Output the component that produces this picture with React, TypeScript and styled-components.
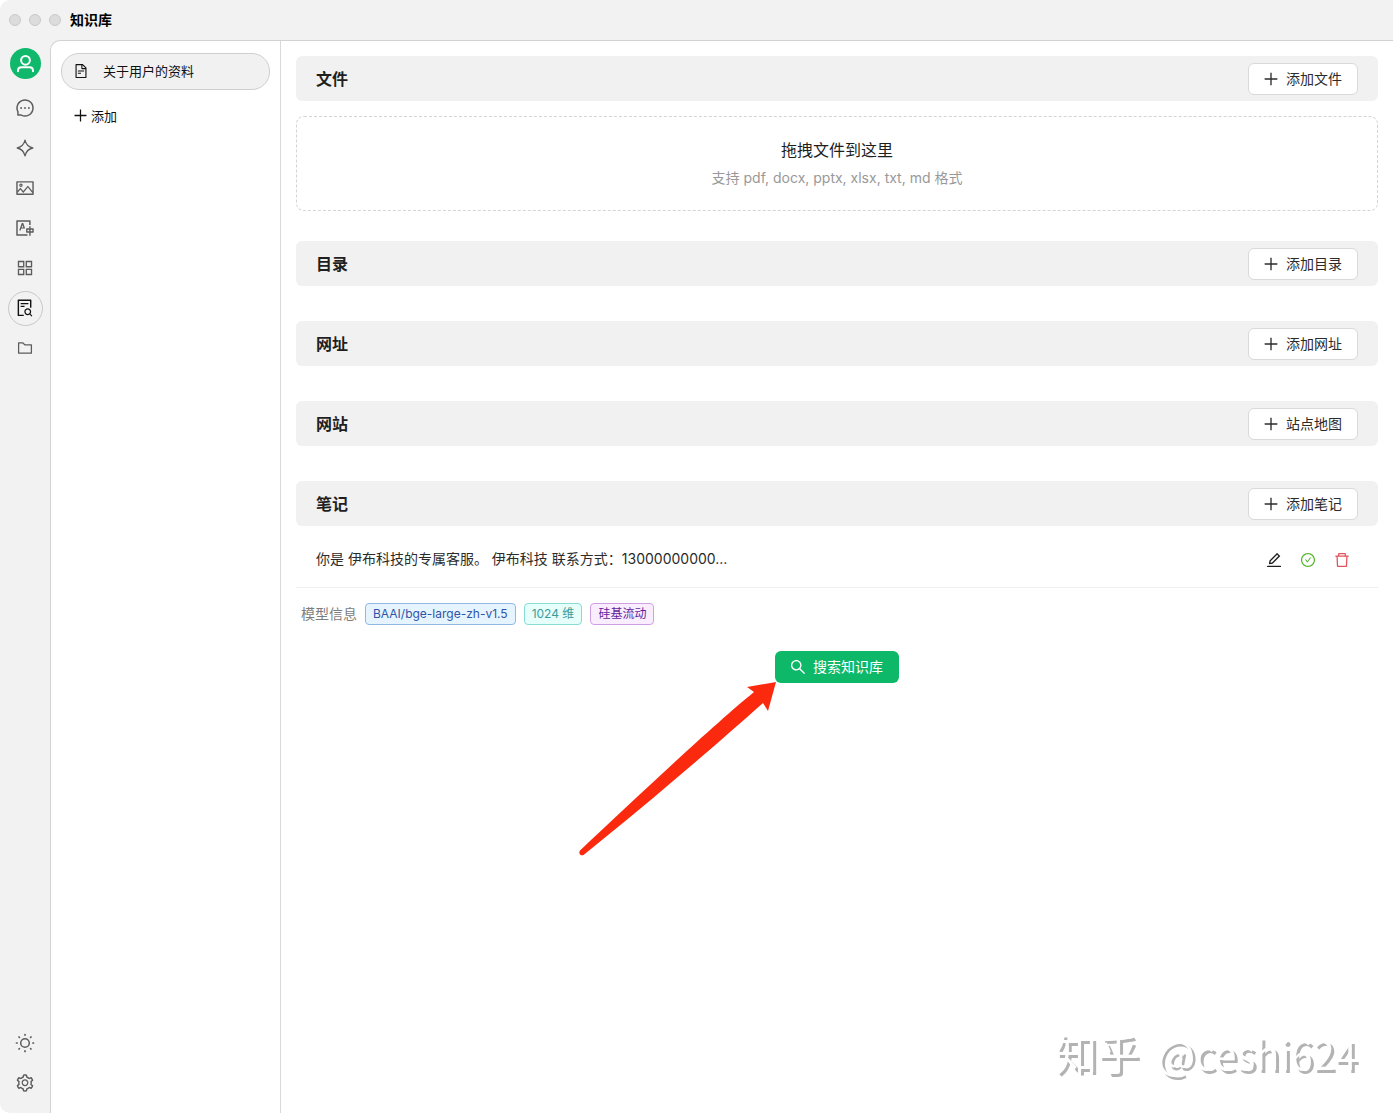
import React from 'react';
import styled, { createGlobalStyle, css } from 'styled-components';
import {
  AiOutlineMessage,
  AiOutlinePicture,
  AiOutlineTranslation,
  AiOutlineAppstore,
  AiOutlineFileSearch,
  AiOutlineFolder,
  AiOutlineSetting,
  AiOutlineFileText,
  AiOutlinePlus,
  AiOutlineEdit,
  AiOutlineCheckCircle,
  AiOutlineDelete,
  AiOutlineSearch,
} from 'react-icons/ai';

const GlobalStyle = createGlobalStyle`
  *, *::before, *::after { box-sizing: border-box; }
  body {
    margin: 0;
    background: #fff;
    color: #1f1f1f;
    font-family: Inter, "Noto Sans CJK SC", sans-serif;
    font-size: 14px;
    line-height: 22px;
  }
  button { font: inherit; color: inherit; cursor: pointer; }
  h1, h2, p { margin: 0; }
`;

const Window = styled.div`
  display: flex;
  flex-direction: column;
  min-height: 100vh;
  background: #f2f2f2;
  border-radius: 10px 0 0 10px;
  overflow: hidden;
`;

const TitleBar = styled.header`
  display: flex;
  align-items: center;
  height: 40px;
  padding-left: 9px;
`;

const Lights = styled.div`
  display: flex;
  gap: 8px;
  margin-right: 9px;
`;

const Light = styled.span`
  width: 12px;
  height: 12px;
  border: 1px solid #c9c9c9;
  border-radius: 50%;
  background: #dcdcdc;
`;

const AppTitle = styled.h1`
  font-size: 14px;
  font-weight: 700;
  line-height: 22px;
  color: #000;
`;

const Body = styled.div`
  display: flex;
  flex: 1;
`;

const Sidebar = styled.nav`
  display: flex;
  flex-direction: column;
  align-items: center;
  justify-content: space-between;
  width: 50px;
  padding: 8px 0 12px 1px;
`;

const SideGroup = styled.div`
  display: flex;
  flex-direction: column;
  align-items: center;
  gap: 5px;
`;

const Avatar = styled.button`
  display: flex;
  align-items: center;
  justify-content: center;
  width: 31px;
  height: 31px;
  margin-bottom: 7px;
  padding: 0;
  border: 0;
  border-radius: 50%;
  background: #0fb86b;
  color: #fff;
`;

const SideButton = styled.button<{ $active?: boolean }>`
  display: flex;
  align-items: center;
  justify-content: center;
  width: 35px;
  height: 35px;
  padding: 0 1px 1px 0;
  border: 1px solid ${(p) => (p.$active ? '#c8c8c8' : 'transparent')};
  border-radius: 50%;
  background: transparent;
  color: ${(p) => (p.$active ? '#111' : '#5c5c5c')};
`;

const Content = styled.div`
  display: flex;
  flex: 1;
  min-width: 0;
  border: solid #d2d2d2;
  border-width: 1px 0 0 1px;
  border-top-left-radius: 10px;
  background: #fff;
`;

const BaseList = styled.aside`
  display: flex;
  flex-direction: column;
  flex: none;
  gap: 8px;
  width: 230px;
  padding: 12px 10px;
  border-right: 1px solid #d9d9d9;
  font-size: 13px;
  color: #111;
`;

const BaseItem = styled.button`
  display: flex;
  align-items: center;
  gap: 14px;
  height: 37px;
  padding: 0 11px 2px;
  border: 1px solid #cfcfcf;
  border-radius: 18px;
  background: #f1f1f1;
`;

const AddBase = styled.button`
  display: flex;
  align-items: center;
  gap: 2px;
  height: 37px;
  padding: 0 11px 2px;
  border: 0;
  background: none;
`;

const Main = styled.main`
  flex: 1;
  min-width: 0;
  padding: 15px;
`;

const Section = styled.section<{ $gap: number }>`
  margin-bottom: ${(p) => p.$gap}px;
`;

const SectionHead = styled.div`
  display: flex;
  align-items: center;
  justify-content: space-between;
  height: 45px;
  padding: 0 20px;
  border-radius: 6px;
  background: #f1f1f1;
`;

const SectionTitle = styled.h2`
  font-size: 16px;
  font-weight: 600;
  line-height: 24px;
`;

const buttonBase = css`
  display: flex;
  align-items: center;
  gap: 8px;
  height: 32px;
  padding: 0 15px;
  border-radius: 6px;
  font-size: 14px;

  svg {
    margin: 0 -2px;
  }
`;

const AddButton = styled.button`
  ${buttonBase}
  border: 1px solid #d9d9d9;
  background: #fff;
  color: #2b2b2b;
`;

const DropZone = styled.button`
  display: flex;
  flex-direction: column;
  align-items: center;
  justify-content: center;
  gap: 5px;
  width: 100%;
  height: 95px;
  margin-top: 15px;
  border: 1px dashed #d4d4d4;
  border-radius: 8px;
  background: #fff;
`;

const DropTitle = styled.span`
  font-size: 16px;
  line-height: 24px;
`;

const DropHint = styled.span`
  line-height: 22px;
  color: #999;
`;

const NoteRow = styled.div`
  display: flex;
  align-items: center;
  justify-content: space-between;
  height: 62px;
  padding: 7px 26px 0 20px;
  border-bottom: 1px solid #efefef;
`;

const NoteText = styled.p`
  padding-bottom: 2px;
  color: #2b2b2b;
`;

const NoteActions = styled.div`
  display: flex;
  gap: 14px;
`;

const IconButton = styled.button<{ $color: string }>`
  display: flex;
  align-items: center;
  justify-content: center;
  width: 20px;
  height: 20px;
  padding: 0;
  border: 0;
  background: none;
  color: ${(p) => p.$color};
`;

const ModelRow = styled.div`
  display: flex;
  align-items: center;
  gap: 8px;
  padding: 15px 5px 0;
`;

const ModelLabel = styled.span`
  color: #7d7d7d;
`;

const Tag = styled.span<{ $fg: string; $bg: string; $line: string }>`
  padding: 0 7px;
  border: 1px solid ${(p) => p.$line};
  border-radius: 4px;
  background: ${(p) => p.$bg};
  color: ${(p) => p.$fg};
  font-size: 12px;
  line-height: 20px;
`;

const SearchRow = styled.div`
  display: flex;
  justify-content: center;
  padding-top: 26px;
`;

const SearchAnchor = styled.div`
  position: relative;
`;

const SearchButton = styled.button`
  ${buttonBase}
  padding: 0 16px;
  border: 0;
  background: #0db869;
  color: #fff;
`;

const Arrow = styled.svg`
  position: absolute;
  top: 30px;
  right: 100%;
  margin-right: -1px;
  pointer-events: none;
`;

const Watermark = styled.div`
  position: fixed;
  right: 36px;
  bottom: 30px;
  display: flex;
  align-items: baseline;
  gap: 18px;
  font-family: "Noto Sans CJK SC", sans-serif;
  font-size: 42px;
  line-height: 60px;
  color: #fff;
  text-shadow: 3px 3px 0 #b3b3b3;
  pointer-events: none;
`;

const Handle = styled.span`
  font-size: 40px;
`;

const UserIcon = () => (
  <svg width="19" height="19" viewBox="0 0 19 19" fill="none" stroke="currentColor" strokeWidth="2" strokeLinecap="round">
    <circle cx="9.5" cy="6.3" r="4.4" />
    <path d="M2 17.2v-.6c0-2 1.400-3.400 3.500-3.400h8c2.100 0 3.500 1.400 3.500 3.400v.6" />
  </svg>
);

const StarIcon = () => (
  <svg width="18" height="18" viewBox="0 0 18 18" fill="none" stroke="currentColor" strokeWidth="1.300" strokeLinejoin="round">
    <path d="M9 1.200C9.900 5.200 12.300 8 16.800 9 12.300 10 9.900 12.800 9 16.800 8.100 12.800 5.700 10 1.200 9 5.700 8 8.100 5.200 9 1.200Z" />
  </svg>
);

const SunIcon = () => (
  <svg width="20" height="20" viewBox="0 0 20 20" fill="none" stroke="currentColor" strokeLinecap="round">
    <circle cx="10" cy="10" r="4.300" strokeWidth="1.500" />
    <path
      strokeWidth="1.700"
      d="M10 1.500v.6M10 17.900v.6M1.500 10h.6M17.900 10h.6M4 4l.4.4M15.600 15.600l.4.4M4 16l.4-.4M15.600 4.400l.4-.4"
    />
  </svg>
);

const navItems = [
  { label: '聊天', icon: <AiOutlineMessage size={20} /> },
  { label: '智能体', icon: <StarIcon /> },
  { label: '绘画', icon: <AiOutlinePicture size={20} /> },
  { label: '翻译', icon: <AiOutlineTranslation size={20} /> },
  { label: '小程序', icon: <AiOutlineAppstore size={20} /> },
  { label: '知识库', icon: <AiOutlineFileSearch size={20} />, active: true },
  { label: '文件', icon: <AiOutlineFolder size={18} /> },
];

interface KnowledgeSectionProps {
  title: string;
  action: string;
  gap?: number;
  children?: React.ReactNode;
}

const KnowledgeSection = ({ title, action, gap = 35, children }: KnowledgeSectionProps) => (
  <Section $gap={gap}>
    <SectionHead>
      <SectionTitle>{title}</SectionTitle>
      <AddButton type="button">
        <AiOutlinePlus size={18} />
        {action}
      </AddButton>
    </SectionHead>
    {children}
  </Section>
);

export default function App() {
  return (
    <>
      <GlobalStyle />
      <Window>
        <TitleBar>
          <Lights>
            <Light />
            <Light />
            <Light />
          </Lights>
          <AppTitle>知识库</AppTitle>
        </TitleBar>
        <Body>
          <Sidebar>
            <SideGroup>
              <Avatar type="button" aria-label="用户">
                <UserIcon />
              </Avatar>
              {navItems.map((item) => (
                <SideButton key={item.label} type="button" aria-label={item.label} $active={item.active}>
                  {item.icon}
                </SideButton>
              ))}
            </SideGroup>
            <SideGroup>
              <SideButton type="button" aria-label="主题">
                <SunIcon />
              </SideButton>
              <SideButton type="button" aria-label="设置">
                <AiOutlineSetting size={20} />
              </SideButton>
            </SideGroup>
          </Sidebar>
          <Content>
            <BaseList>
              <BaseItem type="button">
                <AiOutlineFileText size={16} />
                关于用户的资料
              </BaseItem>
              <AddBase type="button">
                <AiOutlinePlus size={17} />
                添加
              </AddBase>
            </BaseList>
            <Main>
              <KnowledgeSection title="文件" action="添加文件" gap={30}>
                <DropZone type="button">
                  <DropTitle>拖拽文件到这里</DropTitle>
                  <DropHint>支持 pdf, docx, pptx, xlsx, txt, md 格式</DropHint>
                </DropZone>
              </KnowledgeSection>
              <KnowledgeSection title="目录" action="添加目录" />
              <KnowledgeSection title="网址" action="添加网址" />
              <KnowledgeSection title="网站" action="站点地图" />
              <KnowledgeSection title="笔记" action="添加笔记" gap={0}>
                <NoteRow>
                  <NoteText>你是 伊布科技的专属客服。 伊布科技 联系方式：13000000000...</NoteText>
                  <NoteActions>
                    <IconButton type="button" aria-label="编辑" $color="#1f1f1f">
                      <AiOutlineEdit size={18} />
                    </IconButton>
                    <IconButton type="button" aria-label="已完成" $color="#52b52a">
                      <AiOutlineCheckCircle size={16} />
                    </IconButton>
                    <IconButton type="button" aria-label="删除" $color="#e0525c">
                      <AiOutlineDelete size={18} />
                    </IconButton>
                  </NoteActions>
                </NoteRow>
              </KnowledgeSection>
              <ModelRow>
                <ModelLabel>模型信息</ModelLabel>
                <Tag $fg="#2f54a8" $bg="#e6f4ff" $line="#91b8e4">BAAI/bge-large-zh-v1.5</Tag>
                <Tag $fg="#3c9c9c" $bg="#e6fffb" $line="#87dcd4">1024 维</Tag>
                <Tag $fg="#5f1f9c" $bg="#f9edff" $line="#cf9fe4">硅基流动</Tag>
              </ModelRow>
              <SearchRow>
                <SearchAnchor>
                  <SearchButton type="button">
                    <AiOutlineSearch size={18} />
                    搜索知识库
                  </SearchButton>
                  <Arrow width="200" height="176" viewBox="0 0 200 176" aria-hidden="true">
                    <path
                      fill="#fb2a0f"
                      d="M200 1 171 6 178 11C140 42 66 111 4 169.500 2 172 4.500 175.500 7.500 174 70 124 140 64 187 22L192 30Z"
                    />
                  </Arrow>
                </SearchAnchor>
              </SearchRow>
            </Main>
          </Content>
        </Body>
      </Window>
      <Watermark>
        <span>知乎</span>
        <Handle>@ceshi624</Handle>
      </Watermark>
    </>
  );
}
